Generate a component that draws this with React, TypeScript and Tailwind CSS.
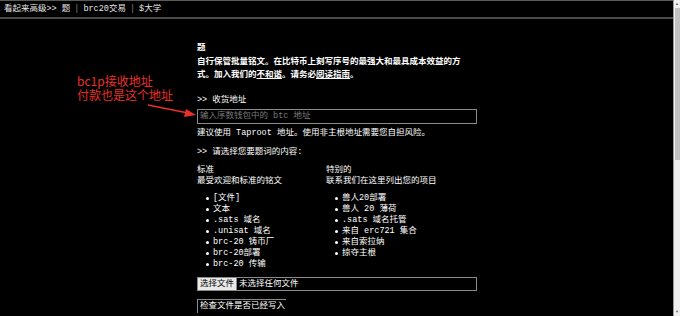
import React from 'react';

const font = { fontFamily: '"Liberation Mono", "Noto Sans CJK SC", monospace' };
const cjk = { fontFamily: '"Noto Sans CJK SC", "Liberation Mono", monospace' };

const standard = ['[文件]', '文本', '.sats 域名', '.unisat 域名', 'brc-20 铸币厂', 'brc-20部署', 'brc-20 传输'];
const special = ['兽人20部署', '兽人 20 薄荷', '.sats 域名托管', '来自 erc721 集合', '来自索拉纳', '掠夺主根'];

const BulletList: React.FC<{ items: string[] }> = ({ items }) => (
  <ul className="mt-[6px] pl-[9px]">
    {items.map((t) => (
      <li key={t} className="flex items-center gap-[4px] leading-[11px] h-[11px]">
        <span className="w-[3px] h-[3px] bg-white rounded-full" />
        <span>{t}</span>
      </li>
    ))}
  </ul>
);

const App: React.FC = () => {
  return (
    <div className="w-[680px] h-[316px] bg-black flex overflow-hidden text-white text-[8.5px]" style={font}>
      <div className="flex-1 relative">
        {/* top bar */}
        <div className="h-[19px] border-t border-[#5a5a5a] border-b-2 border-b-[#4a4a4a] flex items-center pl-[4px] text-[#e6e6e6] gap-[4px]">
          <span>看起来高级&gt;&gt; 题</span>
          <span className="text-[#888]">|</span>
          <span>brc20交易</span>
          <span className="text-[#888]">|</span>
          <span>$大学</span>
        </div>

        <div className="ml-[197px] w-[280px] pt-[22px]">
          <div className="font-bold leading-[11px]" style={cjk}>题</div>
          <p className="font-bold leading-[13px] mt-[2px]" style={cjk}>
            自行保管批量铭文。在比特币上刻写序号的最强大和最具成本效益的方式。加入我们的
            <span className="underline">不和谐</span>。请务必<span className="underline">阅读指南</span>。
          </p>

          <div className="mt-[15px] leading-[11px]">&gt;&gt; 收货地址</div>
          <div className="mt-[3px] h-[15px] border border-[#8a8a8a] flex items-center px-[2px] text-[#7a7a7a]">
            输入序数钱包中的 btc 地址
          </div>
          <div className="mt-[4px] leading-[11px]">建议使用 Taproot 地址。使用非主根地址需要您自担风险。</div>

          <div className="mt-[8px] leading-[11px]">&gt;&gt; 请选择您要题词的内容:</div>

          <div className="mt-[7px] grid grid-cols-[129px_1fr] leading-[11px]">
            <div>
              <div>标准</div>
              <div>最受欢迎和标准的铭文</div>
              <BulletList items={standard} />
            </div>
            <div>
              <div>特别的</div>
              <div>联系我们在这里列出您的项目</div>
              <BulletList items={special} />
            </div>
          </div>

          <div className="mt-[7px] h-[14px] border border-[#8a8a8a] flex items-center">
            <span className="h-full bg-[#e9e9e9] text-black px-[2px] flex items-center border-r border-[#8a8a8a]">选择文件</span>
            <span className="pl-[2px]">未选择任何文件</span>
          </div>

          <div className="mt-[8px] w-[89px] h-[14px] border-l border-t border-[#8a8a8a] flex items-center pl-[2px]">
            检查文件是否已经写入
          </div>
        </div>

        {/* annotation */}
        <div
          className="absolute left-[77px] top-[74px] text-[12px] leading-[14px] text-[#e8302a]"
          style={{ fontFamily: '"Noto Sans CJK SC", "Liberation Sans", sans-serif' }}
        >
          <div>bc1p接收地址</div>
          <div>付款也是这个地址</div>
        </div>
        <svg className="absolute left-[146px] top-[100px]" width="52" height="20" viewBox="0 0 52 20">
          <line x1="2" y1="5" x2="42" y2="13" stroke="#e8302a" strokeWidth="1.6" />
          <polygon points="50,15 40,9 38,17" fill="#e8302a" />
        </svg>
      </div>

      {/* scrollbar */}
      <div className="w-[7px] bg-[#f0f0f0] border-l border-[#9a9a9a] flex flex-col items-center">
        <span className="mt-[2px] text-[4px] leading-[4px] text-[#606060]">▲</span>
        <div className="mt-[2px] w-[5px] h-[152px] bg-[#c1c1c1]" />
        <div className="flex-1" />
        <span className="mb-[2px] text-[4px] leading-[4px] text-[#606060]">▼</span>
      </div>
    </div>
  );
};

export default App;
